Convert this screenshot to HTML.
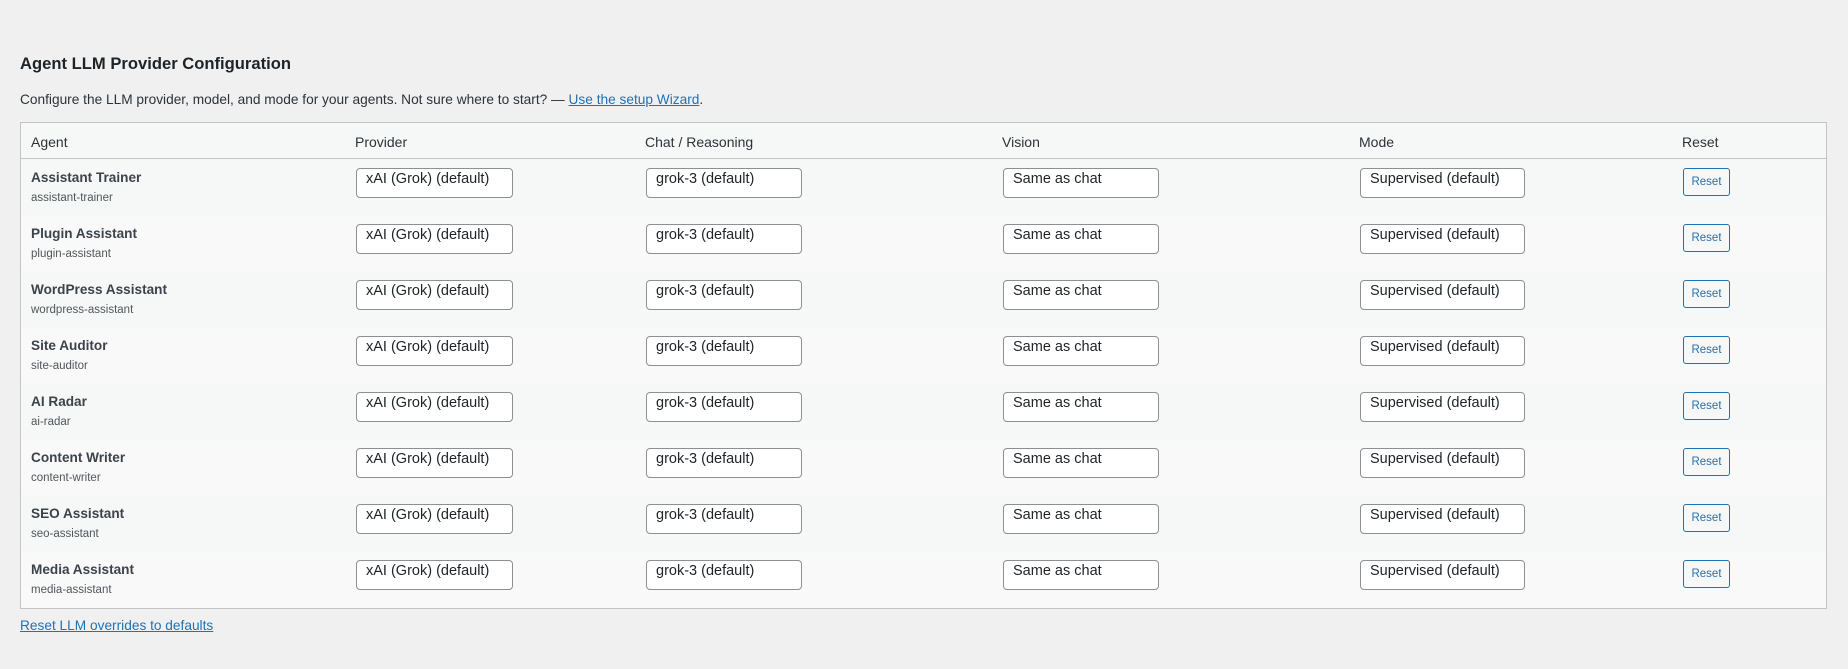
<!DOCTYPE html>
<html><head><meta charset="utf-8"><style>
*{box-sizing:border-box;margin:0;padding:0}
body{width:1848px;height:669px;background:#f0f0f1;font-family:"Liberation Sans",sans-serif;color:#1d2327;position:relative;overflow:hidden}
h2{position:absolute;left:20px;top:54px;font-size:16.6px;font-weight:bold;color:#1d2327}
.desc{position:absolute;left:20px;top:92px;font-size:13.7px;color:#2c3338}
a{color:#2271b1;text-decoration:underline}
.tbl{position:absolute;left:20px;top:122px;width:1807px;height:487px;border:1px solid #c3c4c7;background:#f6f7f7}
.hd{position:absolute;left:0;top:0;width:100%;height:36px;border-bottom:1px solid #c3c4c7;background:#f6f7f7}
.hd span{position:absolute;top:11px;font-size:14px;color:#2c3338}
.row{position:absolute;left:0;width:100%;height:56px}
.nm{position:absolute;left:10px;top:11px;font-size:13.6px;font-weight:bold;color:#3c434a}
.sl{position:absolute;left:10px;top:33px;font-size:11.5px;color:#50575e}
.sel{position:absolute;top:9px;height:30px;border:1px solid #8c8f94;border-radius:4px;background:#fff;font-size:14.5px;color:#1d2327;padding:2px 0 0 9px;white-space:nowrap}
.btn{position:absolute;left:1662px;top:9px;width:47px;height:28px;border:1px solid #2271b1;border-radius:3px;background:#f6f7f7;color:#2271b1;font-size:11.5px;text-align:center;line-height:26px}
.foot{position:absolute;left:20px;top:618px;font-size:13.7px}
</style></head><body>
<h2>Agent LLM Provider Configuration</h2>
<div class="desc">Configure the LLM provider, model, and mode for your agents. Not sure where to start? — <a>Use the setup Wizard</a>.</div>
<div class="tbl">
<div class="hd"><span style="left:10px">Agent</span><span style="left:334px">Provider</span><span style="left:624px">Chat / Reasoning</span><span style="left:981px">Vision</span><span style="left:1338px">Mode</span><span style="left:1661px">Reset</span></div>
<div id="rows"></div>
</div>
<a class="foot">Reset LLM overrides to defaults</a>
<script>
var a=[["Assistant Trainer","assistant-trainer"],["Plugin Assistant","plugin-assistant"],["WordPress Assistant","wordpress-assistant"],["Site Auditor","site-auditor"],["AI Radar","ai-radar"],["Content Writer","content-writer"],["SEO Assistant","seo-assistant"],["Media Assistant","media-assistant"]];
var h="";a.forEach(function(r,i){h+='<div class="row" style="top:'+(36+i*56)+'px;background:'+(i%2?'#f9f9f9':'#f6f7f7')+'"><div class="nm">'+r[0]+'</div><div class="sl">'+r[1]+'</div>'+
'<div class="sel" style="left:335px;width:157px">xAI (Grok) (default)</div>'+
'<div class="sel" style="left:625px;width:156px">grok-3 (default)</div>'+
'<div class="sel" style="left:982px;width:156px">Same as chat</div>'+
'<div class="sel" style="left:1339px;width:165px">Supervised (default)</div>'+
'<div class="btn">Reset</div></div>'});
document.getElementById("rows").innerHTML=h;
</script>
</body></html>
